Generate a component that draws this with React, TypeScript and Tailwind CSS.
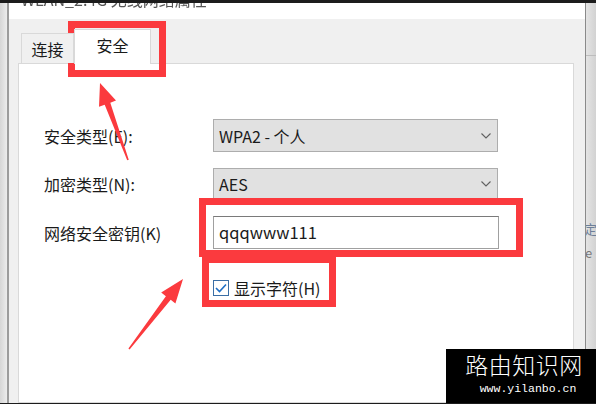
import React from 'react';

const font = "font-['Segoe_UI','Noto_Sans_CJK_SC',sans-serif]";

function Chevron() {
  return (
    <svg width="10" height="6" viewBox="0 0 10 6" className="mr-[6px]">
      <path d="M0.5 0.5 L5 5 L9.5 0.5" fill="none" stroke="#606060" strokeWidth="1.1" />
    </svg>
  );
}

function Select({ value }: { value: string }) {
  return (
    <div className="flex h-full w-[285px] items-center justify-between border border-[#adadad] bg-[#e1e1e1] pl-[5px]">
      <span className="text-[16px] text-[#1a1a1a]">{value}</span>
      <Chevron />
    </div>
  );
}

export default function App() {
  return (
    <div className={`relative h-[404px] w-[596px] overflow-hidden bg-white ${font}`}>
      <div className="h-[3px] bg-[#1c1c1c]" />
      <div className="flex h-[400px]">
        {/* window behind, left edge */}
        <div className="w-[7px] bg-gradient-to-r from-[#d6d6d6] to-[#ececec]" />
        <div className="w-[2px] bg-[#9c9c9c]" />

        {/* dialog */}
        <div className="flex flex-1 flex-col">
          <div className="h-[16px] overflow-hidden bg-white pl-[12px]">
            <div className="mt-[-12px] text-[16px] leading-[17px] text-[#555] blur-[0.7px]">
              WLAN_2.4G 无线网络属性
            </div>
          </div>
          <div className="flex flex-1 flex-col bg-[#f0f0f0] pl-[9px] pr-[11px]">
            <div className="relative z-10 -mb-px flex h-[45px] items-end pl-[3px]">
              <div className="mb-px flex h-[30px] w-[53px] items-center justify-center border border-b-0 border-[#d9d9d9] bg-[#f0f0f0] text-[16px] text-[#1a1a1a]">
                连接
              </div>
              <div className="flex h-[35px] w-[77px] items-start justify-center border border-b-0 border-[#d9d9d9] bg-white pt-[3px] text-[16px] text-[#1a1a1a]">
                安全
              </div>
            </div>
            <div className="flex-1 border border-[#d9d9d9] bg-white pl-[25px] pt-[55px]">
              <div className="flex flex-col gap-[16px] text-[16px] text-[#1a1a1a]">
                <div className="flex h-[33px] items-center">
                  <span className="w-[169px]">安全类型(E):</span>
                  <Select value="WPA2 - 个人" />
                </div>
                <div className="flex h-[32px] items-center">
                  <span className="w-[169px]">加密类型(N):</span>
                  <Select value="AES" />
                </div>
                <div className="flex h-[33px] items-center">
                  <span className="w-[169px]">网络安全密钥(K)</span>
                  <div className="flex h-full w-[286px] items-center border border-[#a0a0a0] border-t-[#7a7a7a] bg-white pl-[5px] text-[16.5px]">
                    qqqwww111
                  </div>
                </div>
              </div>
              <div className="ml-[169px] mt-[27px] flex items-center gap-[5px] text-[16px] text-[#1a1a1a]">
                <div className="flex h-[16px] w-[16px] items-center justify-center border border-[#3a6ea5] bg-white">
                  <svg width="12" height="10" viewBox="0 0 12 10">
                    <path d="M1 5 L4.5 8.5 L11 1.5" fill="none" stroke="#1f6fc5" strokeWidth="1.6" />
                  </svg>
                </div>
                <span>显示字符(H)</span>
              </div>
            </div>
          </div>
        </div>

        {/* window behind, right edge */}
        <div className="w-px bg-[#8a8a8a]" />
        <div className="flex w-[10px] flex-col overflow-hidden bg-gradient-to-r from-[#e4e4e4] to-[#d2d2d2]">
          <div className="h-[52px]" />
          <div className="h-px bg-[#bdbdbd]" />
          <div className="ml-[-2px] mt-[166px] text-[13px] leading-[14px] text-[#6d7f98]">定</div>
          <div className="ml-[-1px] mt-[10px] text-[13px] leading-[14px] text-[#777]">e</div>
        </div>
      </div>
      <div className="h-px bg-[#1c1c1c]" />

      {/* annotations */}
      <div className="absolute left-[68px] top-[21px] h-[56px] w-[98px] border-[7px] border-[#fb3a3e]" />
      <div className="absolute left-[199px] top-[198px] h-[59px] w-[324px] border-[7px] border-[#fb3a3e]" />
      <div className="absolute left-[202px] top-[256px] h-[51px] w-[134px] border-[7px] border-[#fb3a3e]" />
      <svg className="absolute left-0 top-0" width="596" height="404" viewBox="0 0 596 404">
        <polygon
          fill="#fb3a3e"
          points="100,83 116,100.6 110.3,102.7 128.75,159.7 127.2,160.3 104.7,104.7 99,106.8"
        />
        <polygon
          fill="#fb3a3e"
          points="183,279 175.4,303.5 170.7,299.8 129.6,349.5 128.4,348.5 165.9,296.2 161.2,292.5"
        />
      </svg>

      {/* watermark */}
      <div className="absolute left-[446px] top-[349px] flex h-[54px] w-[150px] flex-col items-center bg-black pt-[3px]">
        <div className="pl-[6px] text-[23px] font-light leading-[25px] tracking-[0.5px] text-white">路由知识网</div>
        <div className="mt-[6px] pl-[14px] font-['Liberation_Mono',monospace] text-[11.5px] leading-[12px] text-white">
          www.yilanbo.cn
        </div>
      </div>
    </div>
  );
}
